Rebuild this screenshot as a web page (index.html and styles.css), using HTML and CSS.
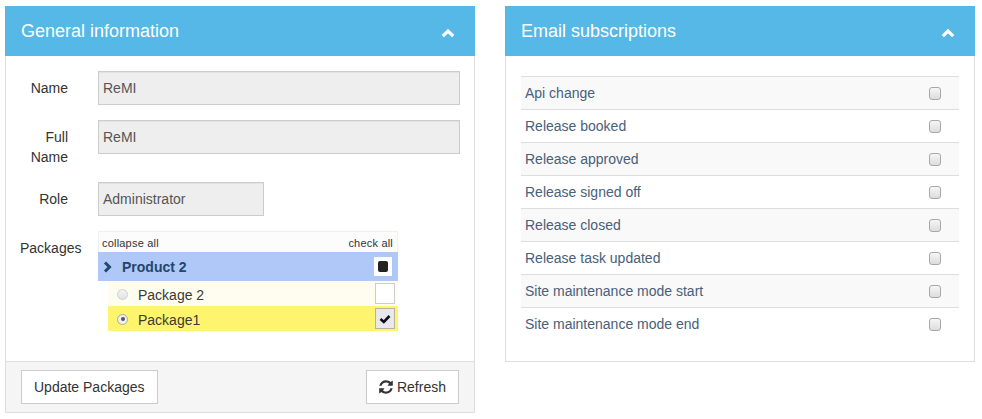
FILE: index.html
```html
<!DOCTYPE html>
<html>
<head>
<meta charset="utf-8">
<title>Profile</title>
<link rel="stylesheet" href="styles.css">
</head>
<body>
<div class="page">
  <section class="panel">
    <header class="panel-heading">
      <h3 class="panel-title">General information</h3>
      <svg class="chev-up" width="14" height="10" viewBox="0 0 14 10"><polyline points="1.8,8.2 7,3 12.2,8.2" fill="none" stroke="#fff" stroke-width="3.2"/></svg>
    </header>
    <div class="panel-body form">
      <div class="form-row">
        <label class="lbl">Name</label>
        <div class="field wide">ReMI</div>
      </div>
      <div class="form-row">
        <label class="lbl">Full Name</label>
        <div class="field wide">ReMI</div>
      </div>
      <div class="form-row">
        <label class="lbl">Role</label>
        <div class="field narrow">Administrator</div>
      </div>
      <div class="form-row">
        <label class="lbl">Packages</label>
        <div class="tree">
          <div class="tree-tools"><span>collapse all</span><span>check all</span></div>
          <div class="tree-node product">
            <svg class="chev-right" width="9" height="12" viewBox="0 0 9 12"><polyline points="2,1.5 6.5,6 2,10.5" fill="none" stroke="#23466d" stroke-width="3"/></svg>
            <span class="node-title">Product 2</span>
            <span class="tcb partial"><i></i></span>
          </div>
          <div class="tree-children">
            <div class="tree-node pkg">
              <span class="radio"></span>
              <span class="pkg-name">Package 2</span>
              <span class="tcb"></span>
            </div>
            <div class="tree-node pkg selected">
              <span class="radio on"></span>
              <span class="pkg-name">Package1</span>
              <span class="tcb checked"><svg width="14" height="12" viewBox="0 0 14 12"><polyline points="2.5,6 5.8,9 11.5,3" fill="none" stroke="#111" stroke-width="2.6"/></svg></span>
            </div>
          </div>
        </div>
      </div>
    </div>
    <footer class="panel-footer">
      <button class="btn">Update Packages</button>
      <button class="btn"><svg class="refresh" width="14" height="14" viewBox="-20 -20 1576 1576"><path fill="#333" d="M1511 928q0 5-1 7-64 268-268 434.5t-478 166.5q-146 0-282.5-55t-243.5-157l-129 129q-19 19-45 19t-45-19-19-45v-448q0-26 19-45t45-19h448q26 0 45 19t19 45-19 45l-137 137q71 66 161 102t187 36q134 0 250-65t186-179q11-17 53-117 8-23 30-23h192q13 0 22.5 9.5t9.5 22.5zm25-800v448q0 26-19 45t-45 19h-448q-26 0-45-19t-19-45 19-45l138-138q-148-137-349-137-134 0-250 65t-186 179q-11 17-53 117-8 23-30 23h-199q-13 0-22.5-9.5t-9.5-22.5v-7q65-268 270-434.5t480-166.5q146 0 284 55.5t245 156.5l130-129q19-19 45-19t45 19 19 45z"/></svg>Refresh</button>
    </footer>
  </section>

  <section class="panel">
    <header class="panel-heading">
      <h3 class="panel-title">Email subscriptions</h3>
      <svg class="chev-up" width="14" height="10" viewBox="0 0 14 10"><polyline points="1.8,8.2 7,3 12.2,8.2" fill="none" stroke="#fff" stroke-width="3.2"/></svg>
    </header>
    <div class="panel-body subs">
      <ul class="sub-list">
        <li><span>Api change</span><span class="cb"></span></li>
        <li><span>Release booked</span><span class="cb"></span></li>
        <li><span>Release approved</span><span class="cb"></span></li>
        <li><span>Release signed off</span><span class="cb"></span></li>
        <li><span>Release closed</span><span class="cb"></span></li>
        <li><span>Release task updated</span><span class="cb"></span></li>
        <li><span>Site maintenance mode start</span><span class="cb"></span></li>
        <li><span>Site maintenance mode end</span><span class="cb"></span></li>
      </ul>
    </div>
  </section>
</div>
</body>
</html>
```
FILE: styles.css
```css
* { box-sizing: border-box; }
html, body { margin: 0; padding: 0; background: #fff; }
body {
  font-family: "Liberation Sans", Arial, sans-serif;
  font-size: 14px;
  line-height: 20px;
  color: #333;
}
.page {
  display: flex;
  align-items: flex-start;
  gap: 30px;
  padding: 6px 0 0 5px;
}
.panel {
  width: 470px;
  border: 1px solid #dedede;
  border-top: none;
  background: #fff;
}
.panel-heading {
  height: 50px;
  margin: 0 -1px;
  background: #55b8e7;
  display: flex;
  align-items: center;
  justify-content: space-between;
  padding: 0 20px 0 16px;
}
.panel-title {
  margin: 0;
  font-size: 18px;
  font-weight: normal;
  color: #fff;
}
.chev-up { display: block; margin-top: 3px; }

.panel-body.form { padding: 15px 14px 15px 14px; }
.form-row {
  display: flex;
  align-items: flex-start;
  gap: 30px;
  margin-bottom: 15px;
}
.lbl {
  width: 48px;
  flex: none;
  text-align: right;
  padding-top: 7px;
  line-height: 20px;
  color: #333;
  white-space: normal;
}
.field {
  height: 34px;
  padding: 6px 4px;
  background: #eee;
  border: 1px solid #ccc;
  color: #555;
  box-shadow: inset 0 1px 1px rgba(0,0,0,0.05);
}
.field.wide { flex: 1; }
.field.narrow { width: 166px; }

.tree { width: 300px; }
.tree-tools {
  height: 21px;
  display: flex;
  justify-content: space-between;
  align-items: center;
  padding: 1px 4px 0 3px;
  font-size: 11px;
  color: #333;
  background: #fcfcfd;
  border: 1px solid #eef0f3;
  border-bottom: none;
  letter-spacing: 0.2px;
}
.tree-node {
  display: flex;
  align-items: center;
}
.tree-node.product {
  height: 29px;
  background: #afc8f8;
  padding: 0 6px 0 5px;
}
.chev-right { display: block; margin-right: 10px; }
.node-title {
  flex: 1;
  font-weight: bold;
  color: #23466d;
}
.tcb {
  width: 20px;
  height: 21px;
  border: 1px solid #ccc;
  background: #fff;
  display: flex;
  align-items: center;
  justify-content: center;
}
.tcb.partial { width: 18px; height: 19px; border-color: #fff; }
.tcb.partial i {
  display: block;
  width: 10px;
  height: 11px;
  background: #222;
  border-radius: 2px;
}
.tcb.checked { background: #e8e8ee; border-color: #b7b29a; }
.tree-children { margin-left: 10px; }
.tree-node.pkg {
  height: 25px;
  padding: 0 3px 0 9px;
  background: #fffdf0;
}
.tree-node.pkg.selected { background: #fff46e; }
.radio {
  width: 11px;
  height: 11px;
  border-radius: 50%;
  border: 1px solid #d0d0d0;
  background: linear-gradient(#f4f4f4, #e2e2e2);
  margin-right: 10px;
  margin-top: 1px;
  flex: none;
  position: relative;
}
.radio.on { border-color: #aaa; background: #f0f0f0; }
.radio.on::after {
  content: "";
  position: absolute;
  left: 2.5px;
  top: 2.5px;
  width: 4px;
  height: 4px;
  border-radius: 50%;
  background: #555;
}
.pkg-name { flex: 1; color: #3b3b36; padding-top: 3px; }

.panel-footer {
  display: flex;
  justify-content: space-between;
  padding: 8px 15px 8px 15px;
  background: #f5f5f5;
  border-top: 1px solid #dedede;
}
.btn {
  height: 34px;
  padding: 6px 12px;
  font-family: inherit;
  font-size: 14px;
  line-height: 20px;
  color: #333;
  background: #fff;
  border: 1px solid #ccc;
  border-radius: 0;
  display: flex;
  align-items: center;
  gap: 4px;
}
.refresh { display: block; }

.panel-body.subs { padding: 20px 15px 21px 15px; }
.sub-list { list-style: none; margin: 0; padding: 0; }
.sub-list li {
  height: 33px;
  border-top: 1px solid #ddd;
  display: flex;
  align-items: center;
  justify-content: space-between;
  padding: 0 18px 0 4px;
  color: #48607a;
}
.sub-list li:nth-child(odd) { background: #f9f9f9; }
.cb {
  width: 12px;
  height: 13px;
  border: 1px solid #a8a8a8;
  border-radius: 3px;
  background: linear-gradient(#f6f6f6, #dcdcdc);
}
```
